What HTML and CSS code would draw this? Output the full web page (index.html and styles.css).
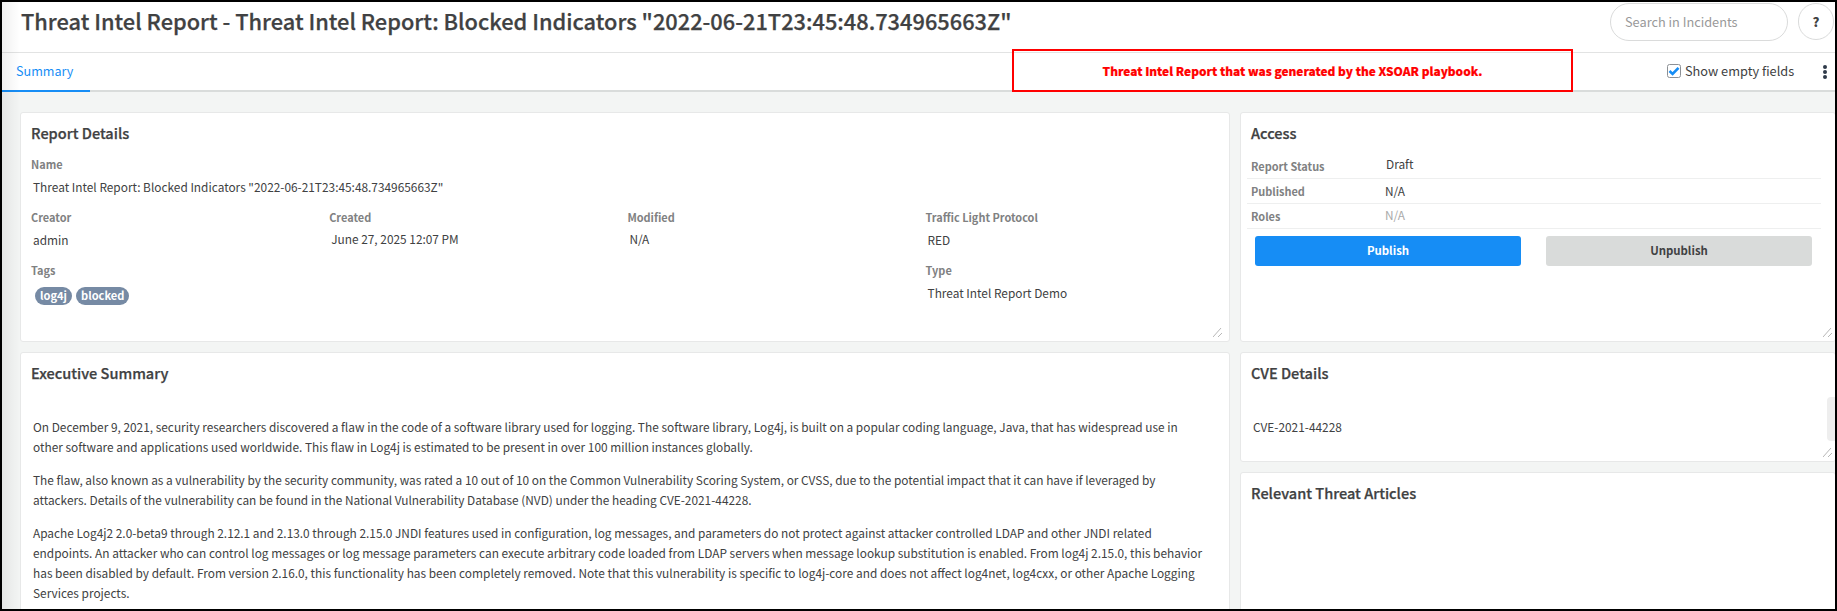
FILE: index.html
```html
<!DOCTYPE html>
<html lang="en">
<head>
<meta charset="utf-8">
<title>Threat Intel Report</title>
<link rel="stylesheet" href="styles.css">
</head>
<body>
<div class="window">
  <header class="header">
    <h1 class="title">Threat Intel Report - Threat Intel Report: Blocked Indicators "2022-06-21T23:45:48.734965663Z"</h1>
    <div class="search">Search in Incidents</div>
    <div class="help">?</div>
  </header>
  <nav class="tabs">
    <div class="tab">Summary</div>
    <div class="callout"><span>Threat Intel Report that was generated by the XSOAR playbook.</span></div>
    <div class="tools">
      <svg class="check" viewBox="0 0 14 14"><rect x=".5" y=".5" width="13" height="13" rx="2" fill="#fff" stroke="#8c9095"/><path d="M2.5 7 5.6 10 11.5 3.8" fill="none" stroke="#168df5" stroke-width="2.6"/></svg>
      <span class="check-label">Show empty fields</span>
      <svg class="dots" viewBox="0 0 4 14" fill="#2f3a4a"><circle cx="2" cy="2" r="2"/><circle cx="2" cy="7" r="2"/><circle cx="2" cy="12" r="2"/></svg>
    </div>
  </nav>
  <main class="board">
    <div class="col">
      <section class="card details">
        <h2>Report Details</h2>
        <div class="grid">
          <div class="field wide"><label>Name</label><p class="name">Threat Intel Report: Blocked Indicators "2022-06-21T23:45:48.734965663Z"</p></div>
          <div class="field"><label>Creator</label><p>admin</p></div>
          <div class="field"><label>Created</label><p class="up">June 27, 2025 12:07 PM</p></div>
          <div class="field"><label>Modified</label><p class="up">N/A</p></div>
          <div class="field"><label>Traffic Light Protocol</label><p>RED</p></div>
          <div class="field tags-field"><label>Tags</label><div class="tags"><span>log4j</span><span>blocked</span></div></div>
          <div class="field"><label>Type</label><p>Threat Intel Report Demo</p></div>
        </div>
        <svg class="grip" viewBox="0 0 9 9" stroke="#b8b8b8"><path d="M0 9 8 0M5 9 9 5"/></svg>
      </section>
      <section class="card summary">
        <h2>Executive Summary</h2>
        <div class="prose">
          <p>On December 9, 2021, security researchers discovered a flaw in the code of a software library used for logging. The software library, Log4j, is built on a popular coding language, Java, that has widespread use in<br>other software and applications used worldwide. This flaw in Log4j is estimated to be present in over 100 million instances globally.</p>
          <p>The flaw, also known as a vulnerability by the security community, was rated a 10 out of 10 on the Common Vulnerability Scoring System, or CVSS, due to the potential impact that it can have if leveraged by<br>attackers. Details of the vulnerability can be found in the National Vulnerability Database (NVD) under the heading CVE-2021-44228.</p>
          <p>Apache Log4j2 2.0-beta9 through 2.12.1 and 2.13.0 through 2.15.0 JNDI features used in configuration, log messages, and parameters do not protect against attacker controlled LDAP and other JNDI related<br>endpoints. An attacker who can control log messages or log message parameters can execute arbitrary code loaded from LDAP servers when message lookup substitution is enabled. From log4j 2.15.0, this behavior<br>has been disabled by default. From version 2.16.0, this functionality has been completely removed. Note that this vulnerability is specific to log4j-core and does not affect log4net, log4cxx, or other Apache Logging<br>Services projects.</p>
        </div>
      </section>
    </div>
    <div class="col">
      <section class="card access">
        <h2>Access</h2>
        <div class="rows">
          <div class="row"><label>Report Status</label><p class="draft">Draft</p></div>
          <div class="row"><label>Published</label><p>N/A</p></div>
          <div class="row"><label>Roles</label><p class="muted">N/A</p></div>
        </div>
        <div class="buttons"><div class="btn primary">Publish</div><div class="btn">Unpublish</div></div>
        <svg class="grip" viewBox="0 0 9 9" stroke="#b8b8b8"><path d="M0 9 8 0M5 9 9 5"/></svg>
      </section>
      <section class="card cve">
        <h2>CVE Details</h2>
        <div class="prose"><p>CVE-2021-44228</p></div>
        <div class="scroll"></div>
        <svg class="grip" viewBox="0 0 9 9" stroke="#b8b8b8"><path d="M0 9 8 0M5 9 9 5"/></svg>
      </section>
      <section class="card articles">
        <h2>Relevant Threat Articles</h2>
      </section>
    </div>
  </main>
  <div class="edge-shade"></div>
</div>
</body>
</html>
```
FILE: styles.css
```css
* { box-sizing: border-box; margin: 0; padding: 0; }
body { font-family: "Noto Sans CJK SC", sans-serif; font-size: 11.87px; color: #404142; overflow: hidden; }
.window { position: relative; width: 1837px; height: 611px; border: 2px solid #000; background: #f3f5f4; display: flex; flex-direction: column; overflow: hidden; white-space: nowrap; }

.header { height: 51px; flex: none; background: #fff; border-bottom: 1px solid #e2e3e3; display: flex; align-items: flex-start; padding: 1px 1px 0 19px; }
.title { flex: 1; font-size: 21.8px; font-weight: 500; line-height: 35px; -webkit-text-stroke: .25px; }
.search { width: 178px; height: 38px; border: 1px solid #dadbdb; border-radius: 19px; padding-left: 14px; font-size: 12.75px; line-height: 36px; color: #999; margin-right: 10px; }
.help { width: 36px; height: 37px; border: 1px solid #dadbdb; border-radius: 18px; text-align: center; font-size: 13px; font-weight: 900; line-height: 35px; }

.tabs { height: 39px; flex: none; background: #fff; border-bottom: 2px solid #d9dcdb; display: flex; position: relative; font-size: 12.75px; }
.tab { width: 88px; height: 39px; border-bottom: 2px solid #168df5; padding-left: 14px; font-size: 12.6px; line-height: 36px; color: #168df5; }
.callout { position: absolute; left: 1010px; top: -4px; width: 561px; height: 43px; border: 2px solid #f00; text-align: center; line-height: 39px; color: #f00; font-size: 11.86px; font-weight: 900; -webkit-text-stroke: .2px; }
.tools { margin-left: auto; display: flex; align-items: flex-start; padding-right: 8px; line-height: 36px; }
.check { width: 14px; height: 14px; margin: 11px 4px 0 0; }
.check-label { width: 138px; }
.dots { width: 4px; height: 14px; margin-top: 12px; }

.board { flex: 1; display: grid; grid-template-columns: 1210px 596px; column-gap: 10px; padding: 20px 0 0 18px; min-height: 0; }
.col { display: flex; flex-direction: column; gap: 10px; min-height: 0; }
.card { position: relative; background: #fff; border: 1px solid #e7e8e8; border-radius: 3px; padding: 10px 10px 0; flex: none; }
.card h2 { font-size: 14.55px; font-weight: 500; line-height: 20px; height: 30px; -webkit-text-stroke: .25px; }
.details, .access { height: 230px; }
.summary { height: 270px; }
.cve { height: 110px; }
.articles { height: 150px; }

label { color: #808182; font-weight: 700; font-size: 10.95px; }
.grid { display: grid; grid-template-columns: repeat(4, 298.2px); grid-template-rows: 53px 53px 60px; padding-top: 1px; }
.wide { grid-column: span 4; }
.tags-field { grid-column: span 3; }
.field label { display: block; line-height: 20px; height: 22px; }
.field p { padding-left: 2px; line-height: 22px; }
.field .up { margin-top: -1px; }
.tags { display: flex; gap: 4px; padding: 5px 0 0 4px; }
.tags span { height: 18px; border-radius: 9px; background: #768aa4; color: #fff; font-size: 11.1px; font-weight: 700; line-height: 17px; padding: 0 5px; }
.prose { padding: 24px 2px 0; line-height: 20px; }
.prose p { margin-bottom: 13px; }

.rows { margin: 1px 4px 0 -4px; }
.row { height: 25px; border-bottom: 1px solid #eeefef; display: flex; padding-left: 4px; line-height: 23px; }
.row label { width: 134px; line-height: 24px; }
.row .draft { padding-left: 1px; margin-top: -2px; }
.row .muted { color: #aaa; margin-top: -1px; }
.buttons { display: flex; gap: 25px; padding: 7px 0 0 4px; }
.btn { width: 266px; height: 30px; border-radius: 3px; background: #d9dbda; text-align: center; line-height: 29px; font-weight: 700; font-size: 11.4px; }
.primary { background: #168df5; color: #fff; }
.grip { position: absolute; right: 7px; bottom: 4px; width: 9px; height: 9px; fill: none; }
.access .grip, .cve .grip { right: 3px; }
.scroll { position: absolute; right: 0; top: 44px; width: 8px; height: 44px; border-radius: 4px 0 0 4px; background: #eee; }
.edge-shade { position: absolute; left: 0; top: 0; bottom: 0; width: 18px; background: linear-gradient(90deg, rgba(0,0,0,.06), transparent); }
```
